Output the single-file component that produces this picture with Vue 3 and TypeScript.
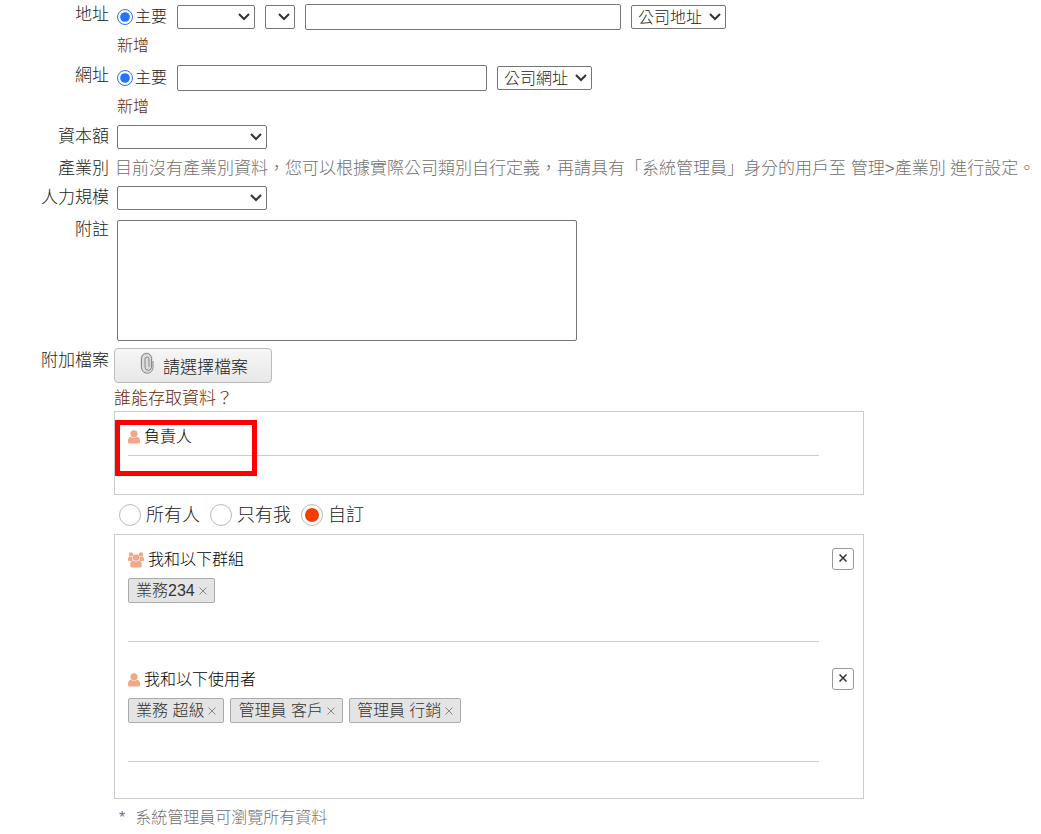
<script setup lang="ts">
import { ref } from 'vue'

interface Section {
  title: string
  kind: 'group' | 'user'
  tags: string[]
}

const access = ref('custom')
const accessOptions = [
  { value: 'all', text: '所有人' },
  { value: 'me', text: '只有我' },
  { value: 'custom', text: '自訂' },
]

const sections = ref<Section[]>([
  { title: '我和以下群組', kind: 'group', tags: ['業務234'] },
  { title: '我和以下使用者', kind: 'user', tags: ['業務 超級', '管理員 客戶', '管理員 行銷'] },
])

function removeTag(section: Section, index: number) {
  section.tags.splice(index, 1)
}

function clearTags(section: Section) {
  section.tags = []
}
</script>

<template>
  <form class="form" @submit.prevent>
    <div class="row">
      <label class="name" for="address">地址</label>
      <div class="field">
        <div class="line">
          <label class="primary"><input type="radio" name="primary-address" checked />主要</label>
          <span class="pick city">
            <select aria-label="縣市"><option></option></select>
            <svg viewBox="0 0 12 8" aria-hidden="true"><path d="M1 1l5 5 5-5" /></svg>
          </span>
          <span class="pick district">
            <select aria-label="區"><option></option></select>
            <svg viewBox="0 0 12 8" aria-hidden="true"><path d="M1 1l5 5 5-5" /></svg>
          </span>
          <input id="address" class="address" type="text" />
          <span class="pick kind">
            <select aria-label="地址類型"><option>公司地址</option></select>
            <svg viewBox="0 0 12 8" aria-hidden="true"><path d="M1 1l5 5 5-5" /></svg>
          </span>
        </div>
        <a class="add" href="#">新增</a>
      </div>
    </div>

    <div class="row">
      <label class="name" for="website">網址</label>
      <div class="field">
        <div class="line">
          <label class="primary"><input type="radio" name="primary-website" checked />主要</label>
          <input id="website" class="website" type="text" />
          <span class="pick kind">
            <select aria-label="網址類型"><option>公司網址</option></select>
            <svg viewBox="0 0 12 8" aria-hidden="true"><path d="M1 1l5 5 5-5" /></svg>
          </span>
        </div>
        <a class="add" href="#">新增</a>
      </div>
    </div>

    <div class="row short">
      <label class="name" for="capital">資本額</label>
      <div class="field">
        <span class="pick range">
          <select id="capital"><option></option></select>
          <svg viewBox="0 0 12 8" aria-hidden="true"><path d="M1 1l5 5 5-5" /></svg>
        </span>
      </div>
    </div>

    <div class="row short industry">
      <span class="name">產業別</span>
      <p class="hint">目前沒有產業別資料，您可以根據實際公司類別自行定義，再請具有「系統管理員」身分的用戶至 管理&gt;產業別 進行設定。</p>
    </div>

    <div class="row short">
      <label class="name" for="staff">人力規模</label>
      <div class="field">
        <span class="pick range">
          <select id="staff"><option></option></select>
          <svg viewBox="0 0 12 8" aria-hidden="true"><path d="M1 1l5 5 5-5" /></svg>
        </span>
      </div>
    </div>

    <div class="row memo">
      <label class="name" for="note">附註</label>
      <div class="field note"><textarea id="note"></textarea></div>
    </div>

    <div class="row">
      <span class="name">附加檔案</span>
      <div class="wide">
        <button class="file" type="button">
          <svg class="clip" viewBox="0 0 14 22" aria-hidden="true">
            <rect class="halo" x="1" y="1" width="11" height="19" rx="5.500" />
            <path d="M13 9v6.500a5.500 5.500 0 0 1-11.500 0V6.500a5 5 0 0 1 10 0V15a2.500 2.500 0 0 1-6.500 0V7a2 2 0 0 1 4 0v8" />
          </svg>
          請選擇檔案
        </button>

        <a class="question" href="#">誰能存取資料？</a>

        <section class="panel owner">
          <h2 class="title">
            <svg class="person" viewBox="0 0 12 14" aria-hidden="true">
              <circle cx="6" cy="3.800" r="3.600" />
              <path d="M2.800 6.800C.8 7.200 0 9 0 11v1q0 1.500 1.500 1.500h9q1.500 0 1.500-1.500v-1c0-2-.8-3.800-2.800-4.200q-3.200 2.400-6.400 0z" />
            </svg>
            負責人
          </h2>
          <div class="tokens"></div>
          <div class="highlight"></div>
        </section>

        <div class="access" role="radiogroup" aria-label="誰能存取資料">
          <label v-for="option in accessOptions" :key="option.value">
            <input v-model="access" type="radio" name="access" :value="option.value" />{{ option.text }}
          </label>
        </div>

        <section class="panel custom">
          <div v-for="section in sections" :key="section.title" class="section">
            <div>
              <h2 class="title">
                <svg v-if="section.kind === 'group'" class="group" viewBox="0 0 16 16" aria-hidden="true">
                  <circle cx="3" cy="2.500" r="2.200" />
                  <circle cx="13" cy="2.500" r="2.200" />
                  <circle cx="8" cy="5.500" r="3.300" />
                  <path d="M1.500 4.500Q0 5 0 7v1q0 1 1 1h3Q5 8 4.200 6.800 3.800 6 4 5 3 5.400 1.500 4.500zM14.500 4.500Q16 5 16 7v1q0 1-1 1h-3Q11 8 11.800 6.800 12.200 6 12 5q1 .4 2.500-.5z" />
                  <path d="M5.300 8.600Q2.200 9 2.200 13v.5Q2.200 15.500 4 15.500h8q1.800 0 1.800-2V13q0-4-3.100-4.400-2.700 1.800-5.400 0z" />
                </svg>
                <svg v-else class="person" viewBox="0 0 12 14" aria-hidden="true">
                  <circle cx="6" cy="3.800" r="3.600" />
                  <path d="M2.800 6.800C.8 7.200 0 9 0 11v1q0 1.500 1.500 1.500h9q1.500 0 1.500-1.500v-1c0-2-.8-3.800-2.800-4.200q-3.200 2.400-6.400 0z" />
                </svg>
                {{ section.title }}
              </h2>
              <div class="tokens">
                <span v-for="(tag, i) in section.tags" :key="tag" class="tag">
                  {{ tag }}
                  <button type="button" :aria-label="'移除 ' + tag" @click="removeTag(section, i)">
                    <svg viewBox="0 0 8 8" aria-hidden="true"><path d="M.5.5l7 7M7.500.5l-7 7" /></svg>
                  </button>
                </span>
              </div>
            </div>
            <button class="clear" type="button" aria-label="清除" @click="clearTags(section)">
              <svg viewBox="0 0 8 8" aria-hidden="true"><path d="M.5.5l7 7M7.500.5l-7 7" /></svg>
            </button>
          </div>
        </section>

        <p class="footnote"><span>*</span>系統管理員可瀏覽所有資料</p>
      </div>
    </div>
  </form>
</template>

<style>
body {
  background: #fff;
}
</style>

<style scoped>
.form {
  color: #222;
  font-family: "Liberation Sans", "Noto Sans CJK TC", sans-serif;
  font-size: 17px;
  font-weight: 300;
  line-height: 24px;
  overflow: hidden;
}
.form * {
  box-sizing: border-box;
}
h2,
p {
  margin: 0;
  font-weight: inherit;
}
a {
  color: #661e08;
  text-decoration: none;
}
input,
select,
textarea,
button {
  margin: 0;
  font-family: inherit;
  font-size: 16px;
  font-weight: inherit;
  color: #222;
}
.row {
  display: grid;
  grid-template-columns: 109px 1fr;
}
.name {
  padding-top: 3px;
  text-align: right;
  white-space: nowrap;
}
.field {
  padding-left: 8px;
  padding-bottom: 3px;
}
.line {
  display: flex;
  align-items: center;
  height: 34px;
  gap: 10px;
}
.primary {
  display: flex;
  align-items: center;
  gap: 2px;
  width: 50px;
  line-height: 32px;
  font-size: 16px;
  white-space: nowrap;
}
.primary input {
  width: 16px;
  height: 16px;
  flex: none;
  accent-color: #2673f8;
}
.pick {
  display: grid;
  align-items: center;
  flex: none;
}
.pick > * {
  grid-area: 1 / 1;
}
.pick svg {
  justify-self: end;
  width: 12px;
  height: 8px;
  margin-right: 5px;
  fill: none;
  stroke: #333;
  stroke-width: 2;
  pointer-events: none;
}
select {
  width: 100%;
  height: 24px;
  padding: 0 0 0 6px;
  appearance: none;
  background: #fff;
  border: 1px solid #767676;
  border-radius: 2px;
}
.city {
  width: 78px;
}
.district {
  width: 30px;
}
.address,
.website {
  height: 26px;
  border: 1px solid #767676;
  border-radius: 2px;
}
.address {
  width: 316px;
}
.website {
  width: 310px;
}
.kind {
  width: 95px;
}
.add {
  display: block;
  width: max-content;
  font-size: 16px;
}
.short {
  min-height: 30px;
}
.short .field {
  display: flex;
  align-items: center;
  padding-bottom: 0;
}
.industry {
  min-height: 31px;
}
.industry .name,
.hint {
  padding-top: 5px;
}
.hint {
  padding-left: 6px;
  color: #707070;
  white-space: nowrap;
}
.range {
  width: 150px;
}
.memo .name {
  padding-top: 5px;
}
.field.note {
  padding-top: 7px;
  padding-bottom: 5px;
}
textarea {
  display: block;
  width: 460px;
  height: 121px;
  border: 1px solid #767676;
  border-radius: 2px;
  resize: none;
}
.wide {
  padding: 2px 10px 0 5px;
}
.file {
  display: flex;
  align-items: center;
  gap: 9px;
  width: 158px;
  height: 35px;
  padding: 0 0 0 25px;
  border: 1px solid #bbb;
  border-radius: 4px;
  background: linear-gradient(#f6f6f6, #e8e8e8);
  font-size: 17px;
  white-space: nowrap;
}
.clip {
  width: 14px;
  height: 22px;
  margin-bottom: 6px;
  fill: none;
  stroke: #888;
}
.halo {
  fill: #ddd;
  stroke: #ccc;
}
.question {
  display: block;
  width: max-content;
  margin-top: 4px;
}
.panel {
  max-width: 750px;
  border: 1px solid #ccc;
}
.owner {
  position: relative;
  padding: 15px 44px 38px 13px;
}
.highlight {
  position: absolute;
  top: 8px;
  left: 0;
  width: 142px;
  height: 56px;
  border: 5px solid #f00;
}
.title {
  display: flex;
  align-items: center;
  gap: 4px;
  color: #000;
  font-size: 16px;
  line-height: 20px;
}
.person,
.group {
  flex: none;
  fill: #f0a888;
}
.person {
  width: 12px;
  height: 14px;
}
.group {
  width: 16px;
  height: 16px;
}
.tokens {
  display: flex;
  flex-wrap: wrap;
  align-content: flex-start;
  gap: 6px;
  min-height: 9px;
  border-bottom: 1px solid #ccc;
}
.access {
  display: flex;
  gap: 10px;
  padding: 9px 5px 8px;
  font-size: 18px;
  line-height: 22px;
}
.access label {
  display: flex;
  align-items: center;
  gap: 5px;
}
.access input {
  appearance: none;
  width: 22px;
  height: 22px;
  border: 1px solid #bbb;
  border-radius: 50%;
}
.access input:checked {
  padding: 3px;
  background: #f93c00 content-box;
}
.custom {
  display: grid;
  gap: 26px;
  padding: 13px 9px 36px 13px;
}
.section {
  display: grid;
  grid-template-columns: 1fr 22px;
  gap: 13px;
  align-items: start;
}
.section .title {
  padding-top: 2px;
}
.section .tokens {
  min-height: 64px;
  margin-top: 8px;
}
.tag {
  display: flex;
  align-items: center;
  height: 25px;
  padding: 0 7px;
  gap: 3px;
  border: 1px solid #aaa;
  border-radius: 2px;
  background: #e4e4e4;
  color: #333;
  font-size: 16px;
}
.tag button {
  display: flex;
  width: 9px;
  padding: 1px 0 0 1px;
  border: 0;
  background: none;
}
.tag svg,
.clear svg {
  width: 8px;
  height: 8px;
  fill: none;
}
.tag svg {
  stroke: #888;
}
.clear {
  display: flex;
  justify-content: center;
  width: 22px;
  height: 22px;
  padding: 5px 0 0;
  border: 1px solid #999;
  border-radius: 3px;
  background: #fff;
}
.clear svg {
  stroke: #333;
  stroke-width: 1.5;
}
.footnote {
  display: flex;
  gap: 10px;
  padding: 7px 0 4px 5px;
  color: #707070;
  font-size: 16px;
}
</style>
